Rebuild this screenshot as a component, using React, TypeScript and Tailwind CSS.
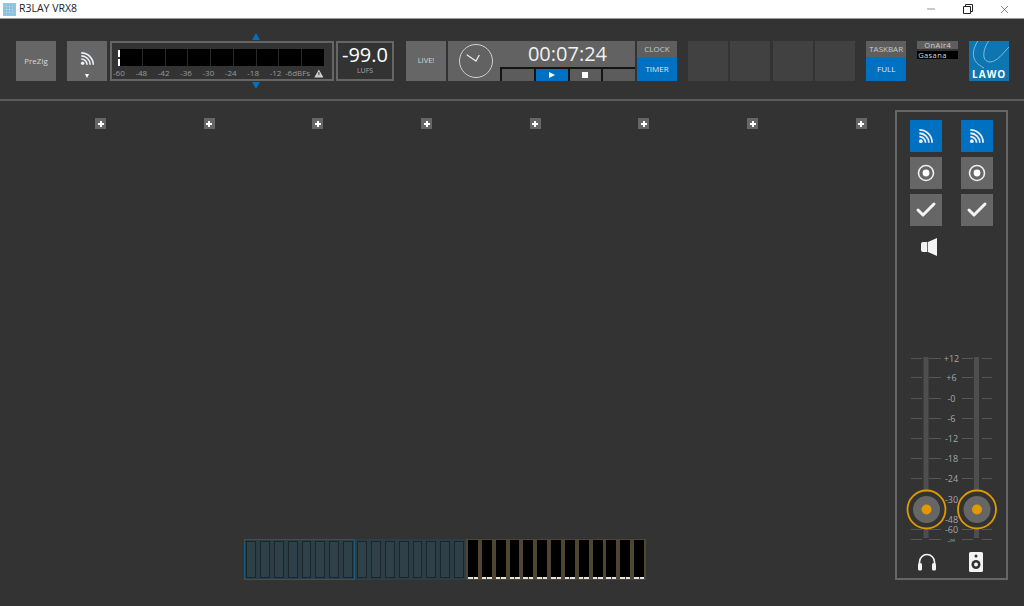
import React from "react";
import { Check, Minus, X } from "lucide-react";

const font = { fontFamily: '"Open Sans", "Liberation Sans", sans-serif' };

const RssIcon = ({ size = 18 }: { size?: number }) => (
  <svg width={size} height={size} viewBox="0 0 18 18" fill="none" stroke="#e8eef2" strokeWidth="2">
    <circle cx="3.2" cy="14.8" r="2.1" fill="#e8eef2" stroke="none" />
    <path d="M1.5 9.6a7 7 0 0 1 7 7" />
    <path d="M1.5 5.9a10.7 10.7 0 0 1 10.7 10.7" />
    <path d="M1.5 2.2a14.4 14.4 0 0 1 14.4 14.4" />
  </svg>
);

const RecIcon = () => (
  <svg width="18" height="18" viewBox="0 0 18 18" fill="none">
    <circle cx="9" cy="9" r="7.5" stroke="#eeeeee" strokeWidth="1.6" />
    <circle cx="9" cy="9" r="3.4" fill="#ffffff" />
  </svg>
);

const SquareBtn = ({ blue, children }: { blue?: boolean; children: React.ReactNode }) => (
  <div className={`w-8 h-8 flex items-center justify-center ${blue ? "bg-[#0070c0]" : "bg-[#666666]"}`}>
    {children}
  </div>
);

const meterLabels = ["-60", "-48", "-42", "-36", "-30", "-24", "-18", "-12"];

const Meter = () => (
  <div className="relative w-[224px] h-10 ml-[3px] border-2 border-[#666666] pl-[6px] pr-2">
    <div className="absolute left-[140px] -top-[10px] w-0 h-0 border-x-[4px] border-x-transparent border-b-[7px] border-b-[#0070c0]" />
    <div className="absolute left-[140px] -bottom-[10px] w-0 h-0 border-x-[4px] border-x-transparent border-t-[7px] border-t-[#0070c0]" />
    <div className="flex mt-[6px] h-[17px]">
      <div className="w-[2px] flex flex-col gap-[2px] pt-[1px]">
        <div className="h-[7px] bg-white" />
        <div className="h-[7px] bg-white" />
      </div>
      <div className="flex flex-1 gap-[1px] bg-[#2a2a2a]">
        {[0, 1, 2, 3, 4, 5, 6, 7, 8].map((i) => (
          <div key={i} className="flex-1 bg-black" />
        ))}
      </div>
    </div>
    <div className="flex items-center -ml-[5px] mt-[2px] text-[8px] leading-[10px] text-[#9a9a9a]">
      {meterLabels.map((l) => (
        <span key={l} className="w-[23px]">
          {l}
        </span>
      ))}
      <span className="-ml-[7px] w-[28px]">-6dBFs</span>
      <svg width="10" height="9" viewBox="0 0 10 9" className="ml-[2px]">
        <path d="M5 0.5 9.7 8.5H0.3Z" fill="#cfcfcf" />
        <path d="M5 3v3.2" stroke="#333" strokeWidth="1" />
      </svg>
    </div>
  </div>
);

const ClockPanel = () => (
  <div className="flex w-[187px] h-10 ml-[2px] bg-[#626262]">
    <div className="w-[52px] flex items-center justify-center">
      <svg width="36" height="36" viewBox="0 0 36 36" fill="none" className="ml-[4px]">
        <circle cx="18" cy="18" r="16.5" stroke="#d0d0d0" strokeWidth="1" />
        <path d="M8.7 11.7 18 18l3.3-6" stroke="#e8e8e8" strokeWidth="1.3" />
      </svg>
    </div>
    <div className="flex flex-1 flex-col">
      <div className="h-[26px] text-center text-[20px] leading-[26px] text-[#f0f0f0]">00:07:24</div>
      <div className="flex flex-1 gap-[2px] bg-[#141414] border-t-2 border-l-2 border-[#141414]">
        <div className="flex-1 bg-[#5c5c5c]" />
        <div className="flex-1 bg-[#0070c0] flex items-center justify-center">
          <div className="w-0 h-0 border-y-[3.5px] border-y-transparent border-l-[6px] border-l-white" />
        </div>
        <div className="flex-1 bg-[#5c5c5c] flex items-center justify-center">
          <div className="w-[6px] h-[6px] bg-white" />
        </div>
        <div className="flex-1 bg-[#5c5c5c]" />
      </div>
    </div>
  </div>
);

const Toggle = ({ top, bottom, className }: { top: string; bottom: string; className: string }) => (
  <div className={`w-10 h-10 flex flex-col text-[8px] text-[#e4e4e4] ${className}`}>
    <div className="h-4 bg-[#5e5e5e] flex items-center justify-center text-[#c8c8c8]">{top}</div>
    <div className="flex-1 bg-[#0070c0] flex items-center justify-center">{bottom}</div>
  </div>
);

const Toolbar = () => (
  <div className="flex h-[82px] pt-[22px] pl-4 shrink-0 border-b-2 border-[#5c5c5c]">
    <div className="w-10 h-10 bg-[#666666] flex items-center justify-center text-[8px] text-[#d6d6d6]">PreZig</div>
    <div className="w-10 h-10 ml-[11px] bg-[#666666] flex flex-col items-center pt-[10px]">
      <RssIcon size={15} />
      <div className="mt-[8px] w-0 h-0 border-x-[2.5px] border-x-transparent border-t-[4px] border-t-white" />
    </div>
    <Meter />
    <div className="w-[58px] h-10 ml-[2px] border-2 border-[#666666] flex flex-col items-center">
      <span className="text-[20px] leading-[22px] mt-[1px] text-white">-99.0</span>
      <span className="text-[7px] leading-[10px] text-[#a8a8a8]">LUFS</span>
    </div>
    <div className="w-10 h-10 ml-[12px] bg-[#666666] flex items-center justify-center text-[7.5px] text-[#d6d6d6]">LIVE!</div>
    <ClockPanel />
    <Toggle top="CLOCK" bottom="TIMER" className="ml-[2px]" />
    <div className="flex gap-[2.4px] ml-[11px]">
      {[0, 1, 2, 3].map((i) => (
        <div key={i} className="w-10 h-10 bg-[#414141]" />
      ))}
    </div>
    <Toggle top="TASKBAR" bottom="FULL" className="ml-[11px]" />
    <div className="w-[41px] ml-[11px] text-[7.5px] leading-[8px] tracking-[0.4px]">
      <div className="h-2 bg-[#5e5e5e] text-center text-[#d0d0d0]">OnAir4</div>
      <div className="h-2 mt-[2px] bg-black pl-[1px] text-[#d8d8d8]">Gasana</div>
    </div>
    <div className="relative w-10 h-10 ml-[11px] bg-[#0f75b0] overflow-hidden">
      <svg width="40" height="40" viewBox="0 0 40 40" fill="none" stroke="#8cc4e2" strokeWidth="0.9" className="absolute inset-0">
        <path d="M8.7 0C3 10 1 20 15 27" />
        <path d="M19.5 0C15 7 11 20 21 21C28 21 34 12 40 6" />
      </svg>
      <span className="absolute left-0 right-0 bottom-[1px] text-center text-[10px] leading-[12px] font-bold tracking-[1px] text-white">
        LAWO
      </span>
    </div>
  </div>
);

const scale = [
  ["+12", 358],
  ["+6", 377],
  ["-0", 398],
  ["-6", 418],
  ["-12", 438],
  ["-18", 458],
  ["-24", 478],
  ["-30", 499],
  ["-48", 519],
  ["-60", 529],
  ["-∞", 539],
] as const;

// svg origin is the inner panel corner, 897/350
const Faders = () => (
  <svg width="109" height="196" viewBox="897 350 109 196" style={font}>
    {scale.map(([label, y]) => (
      <g key={label} stroke="#565656" strokeWidth="1">
        <path d={`M911 ${y + 0.5}h11M929 ${y + 0.5}h12M962 ${y + 0.5}h11M982 ${y + 0.5}h10`} />
        <text x="951.5" y={y + 3.5} textAnchor="middle" fontSize={label === "-∞" ? "7.5" : "9"} fill="#a6a6a6" stroke="none">
          {label}
        </text>
      </g>
    ))}
    <rect x="923.5" y="357" width="5" height="181" fill="#4e4e4e" />
    <rect x="974" y="357" width="5" height="181" fill="#4e4e4e" />
    {[926.5, 977].map((cx) => (
      <g key={cx}>
        <circle cx={cx} cy="509.5" r="19" fill="#333333" stroke="#e09a00" strokeWidth="1.8" />
        <circle cx={cx} cy="509.5" r="13.5" fill="#666666" />
        <circle cx={cx} cy="509.5" r="5" fill="#e09a00" />
      </g>
    ))}
  </svg>
);

const SidePanel = () => (
  <div className="w-[113px] h-[470px] mt-[9px] mr-4 shrink-0 border-2 border-[#666666] flex flex-col">
    <div className="grid grid-cols-[32px_32px] gap-x-[19px] gap-y-[5px] pl-[13px] pt-2">
      <SquareBtn blue><RssIcon size={16} /></SquareBtn>
      <SquareBtn blue><RssIcon size={16} /></SquareBtn>
      <SquareBtn><RecIcon /></SquareBtn>
      <SquareBtn><RecIcon /></SquareBtn>
      <SquareBtn><Check size={24} strokeWidth={3} color="#f4f4f4" /></SquareBtn>
      <SquareBtn><Check size={24} strokeWidth={3} color="#f4f4f4" /></SquareBtn>
    </div>
    <svg width="16" height="18" viewBox="0 0 16 18" className="ml-[24px] mt-[12px]">
      <path d="M2 4h5l9-4v18l-9-4H2a2 2 0 0 1-2-2V6a2 2 0 0 1 2-2Z" fill="#f4f4f4" />
      <path d="M6.5 4v10" stroke="#333" strokeWidth="0.7" />
    </svg>
    <div className="mt-[94px]">
      <Faders />
    </div>
    <div className="flex pl-[20px] mt-[6px] items-center">
      <svg width="20" height="18" viewBox="0 0 20 18" fill="none">
        <path d="M2.5 11V9a7.5 7.5 0 0 1 15 0v2" stroke="#f4f4f4" strokeWidth="1.6" />
        <rect x="1" y="10" width="4" height="7.5" rx="1.5" fill="#f4f4f4" />
        <rect x="15" y="10" width="4" height="7.5" rx="1.5" fill="#f4f4f4" />
      </svg>
      <svg width="14" height="20" viewBox="0 0 14 20" className="ml-[32px]">
        <rect x="0" y="0" width="14" height="20" rx="1.5" fill="#f4f4f4" />
        <circle cx="7" cy="4" r="1.5" fill="#333333" />
        <circle cx="7" cy="12.5" r="4.5" fill="#333333" />
        <circle cx="7" cy="12.5" r="2" fill="#f4f4f4" />
      </svg>
    </div>
  </div>
);

const PlusRow = () => (
  <div className="flex gap-[97.7px] pl-[95px] pt-[17px]">
    {[0, 1, 2, 3, 4, 5, 6, 7].map((i) => (
      <div key={i} className="relative w-[11px] h-[11px] bg-[#666666]">
        <div className="absolute left-[2.5px] top-[4.5px] w-[6px] h-[2px] bg-white" />
        <div className="absolute left-[4.5px] top-[2.5px] w-[2px] h-[6px] bg-white" />
      </div>
    ))}
  </div>
);

const SlotGroup = ({ n }: { n: number }) => (
  <div className="flex gap-[4px] px-[1px]">
    {Array.from({ length: n }).map((_, i) => (
      <div key={i} className="w-[9.9px] h-[37px] bg-[#2f4048] border border-[#1b262c]" />
    ))}
  </div>
);

const BottomStrip = () => (
  <div className="flex h-[41px] ml-[244px] mb-[26px] mt-auto items-stretch">
    <div className="w-[111px] border border-[#1c5a7c] bg-[#2d3d45] pt-[1px]">
      <SlotGroup n={8} />
    </div>
    <div className="w-[111px] bg-[#2d3d45] pt-[2px] pl-[1px]">
      <SlotGroup n={8} />
    </div>
    <div className="flex gap-[3.9px] w-[180px] bg-[#4f4533] px-[2px] pt-[1px]">
      {Array.from({ length: 13 }).map((_, i) => (
        <div key={i} className="relative w-[10px] h-[37px] bg-black">
          <div className="absolute left-0 -bottom-[2px] flex gap-[1px]">
            <div className="w-[4.5px] h-[2px] bg-[#e4e4e4]" />
            <div className="w-[4.5px] h-[2px] bg-[#e4e4e4]" />
          </div>
        </div>
      ))}
    </div>
  </div>
);

const App = () => {
  return (
    <div className="w-[1024px] h-[606px] flex flex-col bg-[#333333] overflow-hidden" style={font}>
      <div className="flex items-center h-[19px] shrink-0 bg-white border-b border-[#9a9a9a]">
        <svg width="13" height="13" viewBox="0 0 13 13" className="ml-[3px]">
          <rect width="13" height="13" fill="#8fc6e4" />
          <path d="M3 3h7v7H3z" fill="#b9dcef" />
          <path d="M2 5h9M2 8h9M5 2v9M8 2v9" stroke="#6aa9cc" strokeWidth="0.7" />
        </svg>
        <span className="ml-[3px] text-[10.5px] text-[#222222]">R3LAY VRX8</span>
        <div className="ml-auto flex items-center text-[#222222]">
          <Minus size={12} strokeWidth={1} />
          <svg width="10" height="10" viewBox="0 0 10 10" fill="none" stroke="#222222" className="ml-[26px]">
            <path d="M.5 2.5h7v7h-7zM2.5 2.5v-2h7v7h-2" />
          </svg>
          <X size={13} strokeWidth={1} className="ml-[25px] mr-[13px]" />
        </div>
      </div>
      <Toolbar />
      <div className="flex flex-1 min-h-0">
        <div className="flex-1 flex flex-col">
          <PlusRow />
          <BottomStrip />
        </div>
        <SidePanel />
      </div>
    </div>
  );
};

export default App;
